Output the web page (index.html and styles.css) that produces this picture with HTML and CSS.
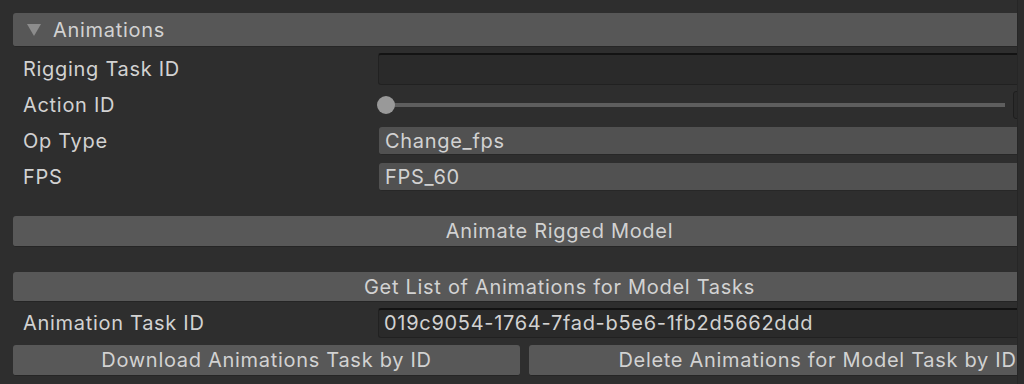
FILE: index.html
```html
<!DOCTYPE html>
<html lang="en">
<head>
    <meta charset="UTF-8">
    <title>Animations</title>
    <link rel="stylesheet" href="styles.css">
</head>
<body>
    <div class="viewport">
        <div class="inspector">
            <div class="foldout">
                <svg class="arrow" width="14" height="12" viewBox="0 0 14 12"><polygon points="0,0 14,0 7,12" fill="#8c8c8c"/></svg>
                <span>Animations</span>
            </div>

            <div class="row">
                <div class="label">Rigging Task ID</div>
                <div class="text-field"></div>
            </div>
            <div class="row">
                <div class="label">Action ID</div>
                <div class="slider">
                    <div class="track"><div class="knob"></div></div>
                    <div class="int-field"></div>
                </div>
            </div>
            <div class="row">
                <div class="label">Op Type</div>
                <div class="popup">Change_fps</div>
            </div>
            <div class="row">
                <div class="label">FPS</div>
                <div class="popup">FPS_60</div>
            </div>

            <button class="btn btn-animate">Animate Rigged Model</button>
            <button class="btn btn-list">Get List of Animations for Model Tasks</button>

            <div class="row row-id">
                <div class="label">Animation Task ID</div>
                <div class="text-field">019c9054-1764-7fad-b5e6-1fb2d5662ddd</div>
            </div>

            <div class="btn-pair">
                <button class="btn btn-download">Download Animations Task by ID</button>
                <button class="btn btn-delete">Delete Animations for Model Task by ID</button>
            </div>
        </div>
    </div>
    <div class="scroll-strip"></div>
</body>
</html>
```

FILE: styles.css
```css
body {
    margin: 0;
    background-color: #2e2e2e;
    color: #d2d2d2;
    font-family: Inter, "Noto Sans", sans-serif;
    font-size: 20px;
    letter-spacing: 0.7px;
    height: 384px;
    overflow: hidden;
    display: flex;
}
.viewport {
    width: 1017px;
    height: 384px;
    flex-shrink: 0;
    overflow: hidden;
}
.scroll-strip {
    flex: 1;
    background-color: #2c2c2c;
    border-left: 1px solid #262626;
}
.inspector {
    padding: 13px 0 0 13px;
    width: 1093px;
}
.foldout {
    display: flex;
    align-items: center;
    height: 33px;
    background-color: #575757;
    border-bottom: 1px solid #262626;
    border-radius: 3px;
    padding-left: 14px;
    margin-bottom: 4px;
}
.foldout .arrow {
    margin-right: 12px;
    margin-top: 1px;
}
.row {
    display: flex;
    align-items: center;
    height: 36px;
}
.label {
    width: 355px;
    flex-shrink: 0;
    padding-left: 10px;
}
.text-field {
    flex: 1;
    height: 29px;
    background-color: #2a2a2a;
    border: 1px solid #212121;
    border-top: 2px solid #131313;
    border-radius: 3px;
    padding-left: 5px;
    line-height: 29px;
}
.slider {
    flex: 1;
    display: flex;
    align-items: center;
    height: 36px;
}
.track {
    position: relative;
    width: 619px;
    flex-shrink: 0;
    margin-left: 8px;
    height: 4px;
    background-color: #5e5e5e;
}
.knob {
    position: absolute;
    left: -9px;
    top: -7px;
    width: 18px;
    height: 18px;
    border-radius: 50%;
    background-color: #999;
}
.int-field {
    flex-shrink: 0;
    margin-left: 8px;
    width: 60px;
    height: 26px;
    border: 1px solid #1e1e1e;
    border-radius: 3px;
    background-color: #2a2a2a;
}
.popup {
    flex: 1;
    height: 28px;
    margin-left: 1px;
    background-color: #515151;
    border-bottom: 1px solid #272727;
    border-radius: 3px;
    padding-left: 6px;
    line-height: 28px;
    box-sizing: border-box;
}
.btn {
    display: block;
    width: 100%;
    height: 31px;
    margin: 0;
    padding: 0;
    border: none;
    border-bottom: 1px solid #252525;
    border-radius: 3px;
    background-color: #585858;
    color: #d2d2d2;
    font-family: inherit;
    font-size: 20px;
    letter-spacing: 0.7px;
    text-align: center;
}
.btn-animate {
    margin-top: 21px;
}
.btn-list {
    margin-top: 25px;
    height: 30px;
}
.row-id {
    height: 42px;
    margin-bottom: 1px;
}
.row-id .text-field {
    height: 27px;
    line-height: 27px;
}
.btn-pair {
    display: flex;
    gap: 9px;
}
.btn-pair .btn-download {
    flex: 0 0 507px;
}
.btn-pair .btn-delete {
    flex: 1;
}
```
